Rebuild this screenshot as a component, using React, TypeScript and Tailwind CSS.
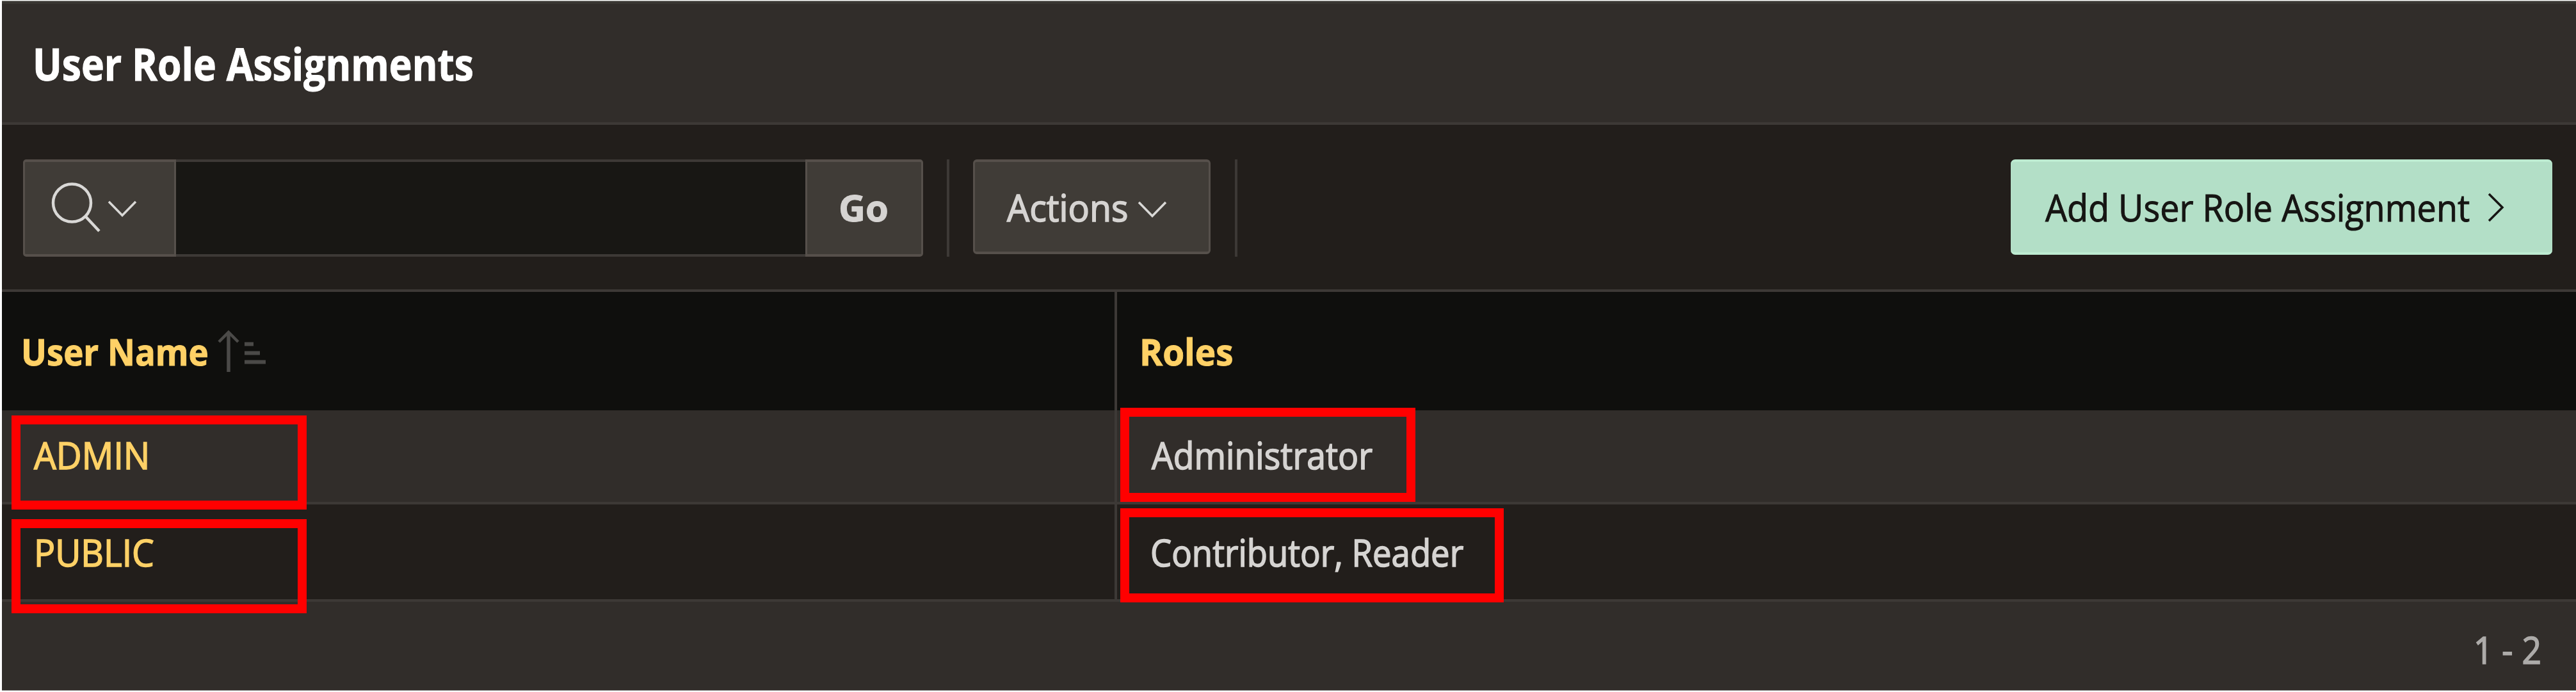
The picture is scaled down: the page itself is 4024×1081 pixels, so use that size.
import type { ReactNode } from "react";

function Label({ className, children }: { className: string; children: ReactNode }) {
  return (
    <span className={`block origin-left whitespace-pre leading-none ${className}`}>{children}</span>
  );
}

function ChevronDown({ className }: { className: string }) {
  return (
    <svg className={className} width="46" height="28" viewBox="0 0 46 28" fill="none" stroke="#d9d8d6" strokeWidth="3.5">
      <path d="M2 2 L23 23.500 L44 2" />
    </svg>
  );
}

function Highlight({ className }: { className: string }) {
  return <div className={`absolute z-10 h-[147px] border-[14px] border-[#ff0000] ${className}`} />;
}

function SortAscending({ className }: { className: string }) {
  return (
    <svg className={className} width="78" height="68" viewBox="0 0 78 68" fill="none" stroke="#4b4a48">
      <path d="M3 20 L18 5 L33 20" strokeWidth="4.500" />
      <path d="M18 5 V67" strokeWidth="5.500" />
      <path d="M43 23.500 H57 M43 37.500 H67 M43 51.500 H76" strokeWidth="6" />
    </svg>
  );
}

export default function App() {
  return (
    <div className="h-[1081px] w-[4024px] overflow-hidden bg-white pl-[3px] pt-px font-['Open_Sans',sans-serif] text-[58px] text-[#d6d4d2]">
      <header className="h-[194px] border-b-4 border-t border-b-[#3d3936] border-t-[#8f918c] bg-[#312d2a]">
        <div className="h-full border-t-4 border-[#3a3733] pl-[48px] pt-[58px]">
          <Label className="text-[70px] font-bold text-white [-webkit-text-stroke:1px] [transform:scaleX(0.866)]">User Role Assignments</Label>
        </div>
      </header>

      <div className="flex h-[261px] items-start border-b-4 border-[#3d3936] bg-[#221e1b] pl-[33px] pr-[37px] pt-[54px]">
        <div className="flex h-[152px] w-[1406px]">
          <button className="flex w-[239px] items-start rounded-l-[5px] border-x-[3px] border-y-4 border-[#56504b] bg-[#403c37] pl-[41px]">
            <svg className="mt-[31px] shrink-0" width="78" height="80" viewBox="0 0 78 80" fill="none" stroke="#d9d8d6" strokeWidth="4.500">
              <ellipse cx="32.500" cy="33" rx="29.500" ry="29.500" />
              <path d="M53.500 54 L75 77" />
            </svg>
            <ChevronDown className="ml-[10px] mt-[60px] shrink-0" />
          </button>
          <div className="flex-1 border-y-4 border-[#3d3936] bg-[#181714]" />
          <button className="flex w-[184px] items-start rounded-r-[5px] border-x-[3px] border-y-4 border-[#56504b] bg-[#403c37] pl-[49px] pt-[42px]">
            <Label className="font-bold [-webkit-text-stroke:1px]">Go</Label>
          </button>
        </div>
        <div className="ml-[37px] h-[152px] w-1 bg-[#3d3936]" />
        <button className="ml-[37px] flex h-[148px] w-[371px] items-start rounded-[6px] border-x-[3px] border-y-4 border-[#56504b] bg-[#403c37] pl-[50px] pt-[42px]">
          <Label className="w-[198px] [-webkit-text-stroke:1.6px] [transform:scaleX(0.957)]">Actions</Label>
          <ChevronDown className="ml-[6px] mt-[19px] shrink-0" />
        </button>
        <div className="ml-[38px] h-[152px] w-1 bg-[#3d3936]" />
        <button className="ml-auto flex h-[149px] w-[846px] items-start rounded-[7px] border-y-4 border-[#bdebd1] bg-[#b3dfc7] pl-[54px] pt-[42px] text-[#161513]">
          <Label className="w-[691px] [-webkit-text-stroke:1px] [transform:scaleX(0.93)]">Add User Role Assignment</Label>
          <svg className="mt-[5px] shrink-0" width="28" height="48" viewBox="0 0 28 48" fill="none" stroke="#161513" strokeWidth="3.500">
            <path d="M2 3 L23 24 L2 45" />
          </svg>
        </button>
      </div>

      <div className="grid grid-cols-[1742px_1fr]">
        <div className="flex h-[185px] items-start border-r-4 border-[#3d3936] bg-[#0f0f0d] pl-[30px] pt-[64px] text-[#ffd166]">
          <Label className="w-[306px] font-bold [-webkit-text-stroke:1px] [transform:scaleX(0.91)]">User Name</Label>
          <SortAscending className="-mt-[6px] shrink-0" />
        </div>
        <div className="h-[185px] bg-[#0f0f0d] pl-[35px] pt-[64px] text-[#ffd166]">
          <Label className="w-fit font-bold [-webkit-text-stroke:1px] [transform:scaleX(0.945)]">Roles</Label>
        </div>

        <div className="relative h-[147px] border-b-4 border-r-4 border-[#3d3936] bg-[#312d2a] pl-[50px] pt-[41px] text-[#ffd166]">
          <Highlight className="left-[15px] top-[8px] w-[461px]" />
          <Label className="w-fit [-webkit-text-stroke:1.6px] [transform:scaleX(0.95)]">ADMIN</Label>
        </div>
        <div className="relative h-[147px] border-b-4 border-[#3d3936] bg-[#312d2a] pl-[54px] pt-[41px]">
          <Highlight className="left-[5px] -top-[4px] w-[461px]" />
          <Label className="w-fit [-webkit-text-stroke:1.6px] [transform:scaleX(0.922)]">Administrator</Label>
        </div>

        <div className="relative h-[152px] border-b-4 border-r-4 border-[#3d3936] bg-[#221e1b] pl-[50px] pt-[46px] text-[#ffd166]">
          <Highlight className="left-[15px] top-[23px] w-[461px]" />
          <Label className="w-fit [-webkit-text-stroke:1.6px] [transform:scaleX(0.95)]">PUBLIC</Label>
        </div>
        <div className="relative h-[152px] border-b-4 border-[#3d3936] bg-[#221e1b] pl-[52px] pt-[46px]">
          <Highlight className="left-[5px] top-[6px] w-[599px]" />
          <Label className="w-fit [-webkit-text-stroke:1.6px] [transform:scaleX(0.908)]">Contributor, Reader</Label>
        </div>
      </div>

      <footer className="flex h-[139px] items-start border-b border-[#8f8d8b] bg-[#312d2a] pl-[3861px] pt-[46px] text-[#adaba9]">
        <Label className="[-webkit-text-stroke:1.6px] [transform:scaleX(0.92)]">1 - 2</Label>
      </footer>
    </div>
  );
}
